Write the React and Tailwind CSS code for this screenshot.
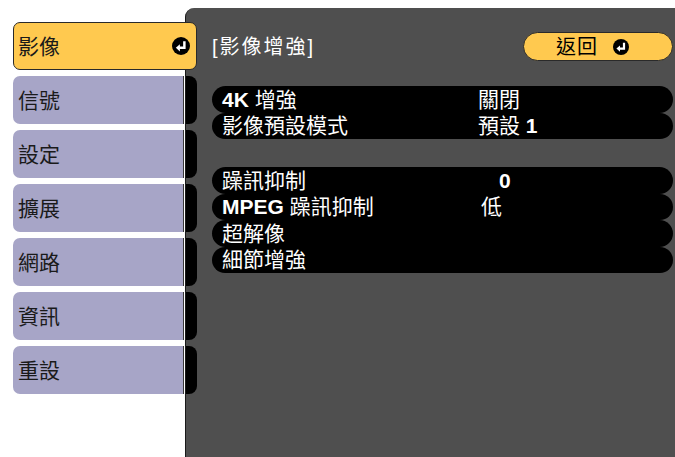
import React from "react";

const FONT = { fontFamily: '"Liberation Sans", "Noto Sans CJK TC", sans-serif' };

function EnterIcon({ size = 17 }) {
  return (
    <svg width={size} height={size} viewBox="0 0 16 16">
      <circle cx="8" cy="8" r="8" fill="#000" />
      <path d="M11 3.8 V9.6 H6.2" stroke="#fff" strokeWidth="2.2" fill="none" />
      <path d="M3.4 9.6 L7 6.4 L7 12.8 Z" fill="#fff" />
    </svg>
  );
}

const tabs = ["信號", "設定", "擴展", "網路", "資訊", "重設"];

function Row({ label, value, valueClass = "" }) {
  return (
    <div className="h-[26.5px] bg-black rounded-full flex items-center pl-[10px] text-white text-[21px] leading-none">
      <div className="w-[256px] shrink-0 whitespace-nowrap">{label}</div>
      <div className={"whitespace-nowrap " + valueClass}>{value}</div>
    </div>
  );
}

export default function App() {
  return (
    <div className="w-[675px] h-[457px] bg-white flex pt-[8px] overflow-hidden" style={FONT}>
      <div className="w-[185px] shrink-0 pt-[14px] pl-[13px] flex flex-col gap-[6px] relative z-10">
        <div className="w-[184px] h-[48px] bg-[#ffc94f] border border-[#2a2a2a] rounded-[7px] flex items-center justify-between pl-[4px] pr-[6px]">
          <span className="text-[21px] text-[#1a1a1a] leading-none">影像</span>
          <EnterIcon size={18} />
        </div>
        {tabs.map((t) => (
          <div
            key={t}
            className="w-[171px] h-[48px] bg-[#a7a5c7] rounded-l-[7px] border-r border-[#3a3a3a] flex items-center pl-[5px]"
          >
            <span className="text-[21px] text-[#1a1a1a] leading-none">{t}</span>
          </div>
        ))}
      </div>
      <div className="flex-1 h-[449px] bg-[#4f4f4f] rounded-tl-[9px] border-l border-[#1a1a1a] flex">
        <div className="w-[11px] shrink-0 pt-[14px] flex flex-col gap-[6px]">
          <div className="h-[48px]" />
          {tabs.map((t) => (
            <div key={t} className="h-[48px] bg-black rounded-r-[8px]" />
          ))}
        </div>
        <div className="flex-1 pl-[15px] pr-[2px] pt-[24px] flex flex-col">
          <div className="h-[29px] flex items-center justify-between">
            <span className="text-white text-[20px] leading-none tracking-[2px]">[影像增強]</span>
            <div className="w-[150px] h-[29px] bg-[#ffc94f] border border-[#2a2a2a] rounded-full flex items-center pl-[32px] gap-[15px]">
              <span className="text-[20px] text-black leading-none tracking-[1px]">返回</span>
              <EnterIcon size={16} />
            </div>
          </div>
          <div className="mt-[25px] flex flex-col">
            <Row label={<><b>4K</b> 增強</>} value="關閉" />
            <Row label="影像預設模式" value={<>預設 <b>1</b></>} />
          </div>
          <div className="mt-[28px] flex flex-col">
            <Row label="躁訊抑制" value={<b>0</b>} valueClass="pl-[21px]" />
            <Row label={<><b>MPEG</b> 躁訊抑制</>} value="低" valueClass="pl-[3px]" />
            <Row label="超解像" value="" />
            <Row label="細節增強" value="" />
          </div>
        </div>
      </div>
    </div>
  );
}
